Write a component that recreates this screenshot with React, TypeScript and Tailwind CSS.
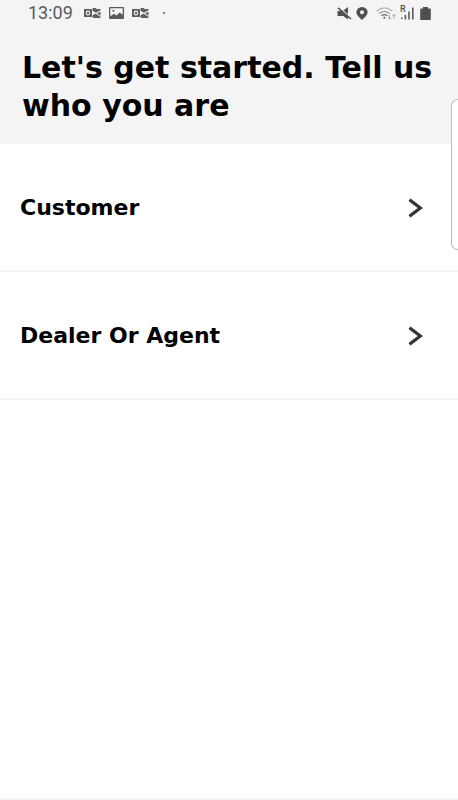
import React from 'react';

interface RoleOption {
  id: string;
  label: string;
}

const roles: RoleOption[] = [
  { id: 'customer', label: 'Customer' },
  { id: 'dealer', label: 'Dealer Or Agent' },
];

const OutlookIcon = () => (
  <svg width="17" height="12" viewBox="0 0 17 12" fill="none" aria-hidden="true">
    <path d="M0 2h8v8H0z" fill="#5f5f5f" />
    <ellipse cx="4" cy="6" rx="1.7" ry="1.9" stroke="#f4f4f4" strokeWidth="1.1" />
    <path d="M8.6 1h3l1 1h3.9v1.2L12 5.8 8.6 4z" fill="#5f5f5f" />
    <path d="M16.5 4.4v4.4L13 6.6zM8.6 8l3-1.2 4.9 3V11H8.6z" fill="#5f5f5f" />
  </svg>
);

const PictureIcon = () => (
  <svg width="15" height="12" viewBox="0 0 15 12" aria-hidden="true">
    <rect width="15" height="12" rx="1" fill="#5a5a5a" />
    <path d="M1.3 1.3h12.4v6.4L10.6 5.6 7.6 8.4 5 6.8 1.3 9.2z" fill="#f4f4f4" />
    <circle cx="4.4" cy="3.8" r="1" fill="#5a5a5a" />
  </svg>
);

const MutedIcon = () => (
  <svg width="15" height="13" viewBox="0 0 15 13" aria-hidden="true">
    <path d="M.5 4h3.8l6.7 5.6v3L6.2 9H.5zM6.4 3.4L11 0v7.2z" fill="#4f4f4f" />
    <path d="M1 .8L14 12" stroke="#4f4f4f" strokeWidth="1.6" />
  </svg>
);

const LocationIcon = () => (
  <svg width="12" height="13" viewBox="0 0 12 13" aria-hidden="true">
    <path
      d="M6 0a5.6 5.2 0 0 0-5.6 5.2C.4 8.6 4 10.6 6 13c2-2.4 5.6-4.4 5.6-7.8A5.6 5.2 0 0 0 6 0zm0 3.2a2 2 0 1 1 0 4 2 2 0 0 1 0-4z"
      fill="#4f4f4f"
      fillRule="evenodd"
    />
  </svg>
);

const WifiIcon = () => (
  <svg width="20" height="13" viewBox="0 0 20 13" fill="none" aria-hidden="true">
    <path d="M.7 4.2Q8.5-2.4 16.3 4.2" stroke="#b5b5b5" strokeWidth="1.2" />
    <path d="M3.2 6.6Q8.5 2.4 13.8 6.6" stroke="#8a8a8a" strokeWidth="1.2" />
    <path d="M5.4 8.8Q8.5 6.4 11.4 8.8" stroke="#6a6a6a" strokeWidth="1.2" />
    <circle cx="8.3" cy="10.7" r="1" fill="#555" />
    <path d="M13.5 8v4M12 10.6l1.5 1.6 1.5-1.6M18 11.5v-4M16.5 9L18 7.4 19.5 9" stroke="#a5a5a5" />
  </svg>
);

const SignalIcon = () => (
  <span className="relative block h-[14px] w-[14px]">
    <span className="absolute -top-px left-0 text-[9px] leading-2 font-medium text-[#4f4f4f]">R</span>
    <svg width="14" height="14" viewBox="0 0 14 14" aria-hidden="true">
      <path d="M1 11.5h1.6V13H1zM4.6 9h1.6v4.5H4.6zM8.2 5.5h1.6v8H8.2zM12 1.5h1.6v12H12z" fill="#5a5a5a" />
    </svg>
  </span>
);

const BatteryIcon = () => (
  <svg width="11" height="13" viewBox="0 0 11 13" aria-hidden="true">
    <path d="M3 0h5v1.4h2a.8.8 0 0 1 .8.8v10a.8.8 0 0 1-.8.8H1a.8.8 0 0 1-.8-.8v-10A.8.8 0 0 1 1 1.4h2z" fill="#4f4f4f" />
  </svg>
);

const Chevron = () => (
  <svg width="16" height="20" viewBox="0 0 16 20" fill="none" aria-hidden="true">
    <path d="M1.5 1.8L12.3 10L1.5 18.2" stroke="#333" strokeWidth="3.2" />
  </svg>
);

const StatusBar = () => (
  <div className="flex h-[26px] items-center justify-between pr-[27px] pl-7 font-[Roboto,sans-serif] text-[#5a5a5a]">
    <div className="flex items-center">
      <span className="text-lg leading-6">13:09</span>
      <div className="ml-[11px] flex items-center gap-2">
        <OutlookIcon />
        <PictureIcon />
        <OutlookIcon />
      </div>
      <span className="ml-[14px] h-0.5 w-0.5 rounded-full bg-[#5a5a5a]" />
    </div>
    <div className="flex items-center gap-1">
      <MutedIcon />
      <LocationIcon />
      <span className="pl-1">
        <WifiIcon />
      </span>
      <SignalIcon />
      <span className="pl-0.5">
        <BatteryIcon />
      </span>
    </div>
  </div>
);

export default function App() {
  return (
    <div className="relative flex min-h-screen flex-col overflow-hidden border-b-2 border-[#f3f3f3] bg-white font-['DejaVu_Sans',sans-serif] text-black">
      <header className="bg-[#f4f4f4] pb-[19px]">
        <StatusBar />
        <h1 className="pt-[23px] pl-[22px] text-[30px] leading-[38px] font-bold">
          Let's get started. Tell us who you are
        </h1>
      </header>

      <main>
        {roles.map((role) => (
          <button
            key={role.id}
            type="button"
            className="flex h-32 w-full cursor-pointer items-center justify-between border-b-2 border-[#f3f3f3] pt-0.5 pr-[34px] pl-5 text-left"
          >
            <span className="text-[22px] leading-7 font-bold">{role.label}</span>
            <Chevron />
          </button>
        ))}
      </main>

      {/* Edge panel handle */}
      <div className="absolute top-[99px] right-0 h-[151px] w-[7px] rounded-l-lg border border-r-0 border-[#bdbdbd] bg-white" />
    </div>
  );
}
